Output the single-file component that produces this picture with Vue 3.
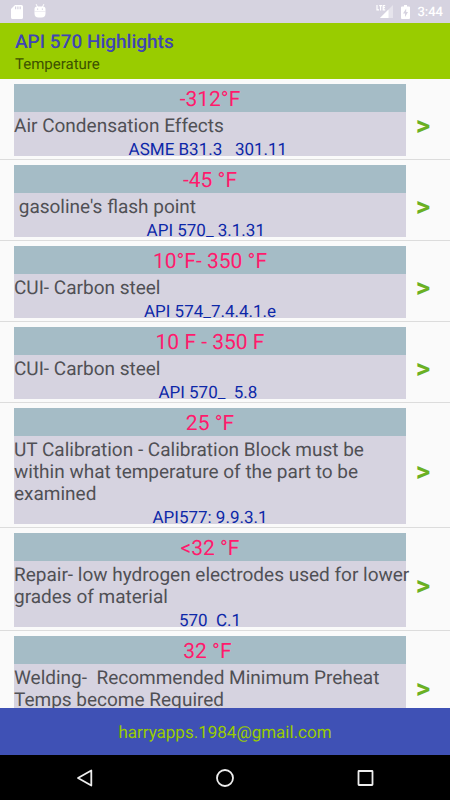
<script setup>
const entries = [
  { temp: '-312°F', text: 'Air Condensation Effects', code: 'ASME B31.3   301.11 ' },
  { temp: '-45 °F', text: ' gasoline\'s flash point', code: 'API 570_ 3.1.31  ' },
  { temp: '10°F- 350 °F', text: 'CUI- Carbon steel', code: 'API 574_7.4.4.1.e' },
  { temp: '10 F - 350 F', text: 'CUI- Carbon steel', code: 'API 570_  5.8 ' },
  {
    temp: '25 °F',
    text: 'UT Calibration - Calibration Block must be within what temperature of the part to be examined',
    code: 'API577: 9.9.3.1',
  },
  {
    temp: '<32 °F',
    text: 'Repair- low hydrogen electrodes used for lower grades of material',
    code: '570  C.1',
  },
  {
    temp: '32 °F ',
    text: 'Welding-  Recommended Minimum Preheat Temps become Required',
    code: '',
  },
]
</script>

<template>
  <div class="screen">
    <div class="status">
      <div class="status-group left">
        <svg width="12" height="14" viewBox="0 0 12 14">
          <path fill="#fff" fill-rule="evenodd" d="M4 0H10.5Q12 0 12 1.500V12.500Q12 14 10.500 14H1.500Q0 14 0 12.500V4ZM4 1.500V4.300H5.200V1.500ZM6.300 1.500V4.300H7.500V1.500ZM8.600 1.500V4.300H9.800V1.500Z" />
        </svg>
        <svg width="12" height="16" viewBox="0 0 12 16">
          <path stroke="#fff" stroke-width="1" stroke-linecap="round" d="M2.300 .5 3.500 3M9.700 .5 8.500 3" />
          <path fill="#fff" fill-rule="evenodd" d="M3 2.500H9Q11.500 2.500 11.500 5V9.500Q11.500 13.500 7.500 13.500H4.500Q.5 13.500 .5 9.500V5Q.5 2.500 3 2.500ZM3 4.500V5.700H4.200V4.500ZM7.800 4.500V5.700H9V4.500Z" />
          <path stroke="#d6d3e0" stroke-width=".4" d="M.5 7.500H11.500" />
        </svg>
      </div>
      <div class="status-group right">
        <svg width="18" height="15" viewBox="0 0 18 15">
          <path fill="#fff" fill-opacity=".4" d="M17 1V14H4Z" />
          <path fill="#fff" d="M12.500 5.500V14H4Z" />
          <path fill="none" stroke="#fff" stroke-width="1.200" d="M1 1V5.900H3M3.200 1.600H6M4.600 1.600V6.500M9.200 1.600H7.200V5.900H9.200M7.200 3.700H9" />
        </svg>
        <svg width="9" height="14" viewBox="0 0 9 14">
          <path fill="#fff" fill-rule="evenodd" d="M3 0H6V1.500H8Q9 1.500 9 2.500V13Q9 14 8 14H1Q0 14 0 13V2.500Q0 1.500 1 1.500H3ZM5.200 3.500 2 8.500H4V12L7 7H5.200Z" />
        </svg>
        <span class="clock">3:44</span>
      </div>
    </div>

    <header class="appbar">
      <h1>API 570 Highlights</h1>
      <p>Temperature</p>
    </header>

    <ul class="list">
      <li v-for="(entry, i) in entries" :key="i" class="row">
        <article class="card">
          <h2 class="temp">{{ entry.temp }}</h2>
          <p class="text">{{ entry.text }}</p>
          <p class="code">{{ entry.code }}</p>
        </article>
        <button class="open" type="button">&gt;</button>
      </li>
    </ul>

    <footer class="contact">
      <a href="mailto:harryapps.1984@gmail.com">harryapps.1984@gmail.com</a>
    </footer>

    <nav class="navbar">
      <button type="button" aria-label="Back">
        <svg width="20" height="20" viewBox="0 0 20 20"><path d="M16.300 2.500V17.500L3 10Z" /></svg>
      </button>
      <button type="button" aria-label="Home">
        <svg width="20" height="20" viewBox="0 0 20 20"><circle cx="10" cy="10" r="8" /></svg>
      </button>
      <button type="button" aria-label="Recent apps">
        <svg width="20" height="20" viewBox="0 0 20 20"><rect x="3.500" y="3" width="14" height="14" rx=".5" /></svg>
      </button>
    </nav>
  </div>
</template>

<style>
body {
  margin: 0;
}
</style>

<style scoped>
.screen {
  display: flex;
  flex-direction: column;
  height: 100vh;
  overflow: hidden;
  background: #fafafa;
  font-family: Roboto, "Liberation Sans", sans-serif;
  text-rendering: geometricPrecision;
}

h1,
h2,
p,
ul {
  margin: 0;
  padding: 0;
  font-weight: 400;
}

button {
  padding: 0;
  border: 0;
  background: none;
  font-family: inherit;
  text-rendering: inherit;
}

.status {
  flex: none;
  display: flex;
  justify-content: space-between;
  align-items: center;
  height: 23px;
  padding: 0 7px 0 11px;
  background: #d6d3e0;
}

.status-group {
  display: flex;
  align-items: center;
}

.left {
  gap: 11px;
}

.right {
  gap: 7px;
}

.clock {
  padding-top: 2px;
  color: #fff;
  font-size: 13px;
  font-weight: 500;
}

.appbar {
  flex: none;
  box-sizing: border-box;
  height: 56px;
  padding: 7px 15px 0;
  background: #99cc00;
}

.appbar h1 {
  color: #3f45b5;
  font-size: 19px;
  font-weight: 500;
  line-height: 24px;
}

.appbar p {
  color: #3d5200;
  font-size: 15px;
  line-height: 20px;
}

.list {
  flex: 1;
  min-height: 0;
  overflow: hidden;
  list-style: none;
}

.row {
  display: flex;
  padding: 5px 0 3px 14px;
  border-bottom: 1px solid #dcdcdc;
}

.card {
  flex: 1;
  min-width: 0;
  background: #d6d3e0;
}

.temp {
  padding-top: 4px;
  background: #a5bcc6;
  color: #ff1a6c;
  font-size: 21px;
  line-height: 24px;
  text-align: center;
  white-space: pre;
}

.text {
  margin-right: -8px;
  padding-top: 3px;
  color: #505055;
  font-size: 19px;
  line-height: 22px;
  white-space: pre-wrap;
}

.code {
  height: 19px;
  overflow: hidden;
  color: #0d28a8;
  font-size: 17px;
  line-height: 26px;
  text-align: center;
  white-space: pre;
}

.open {
  width: 44px;
  padding: 12px 10px 0 0;
  color: #6ab023;
  font-size: 28px;
  line-height: 32px;
  font-weight: 700;
}

.contact {
  flex: none;
  display: flex;
  align-items: center;
  justify-content: center;
  height: 47px;
  background: #3f51b5;
}

.contact a {
  padding-top: 2px;
  color: #99cc00;
  font-size: 17px;
  text-decoration: none;
}

.navbar {
  flex: none;
  display: flex;
  align-items: center;
  justify-content: center;
  gap: 120px;
  height: 45px;
  background: #000;
}

.navbar button {
  display: flex;
}

.navbar svg {
  fill: none;
  stroke: #eee;
  stroke-width: 1.800;
  stroke-linejoin: round;
}
</style>
